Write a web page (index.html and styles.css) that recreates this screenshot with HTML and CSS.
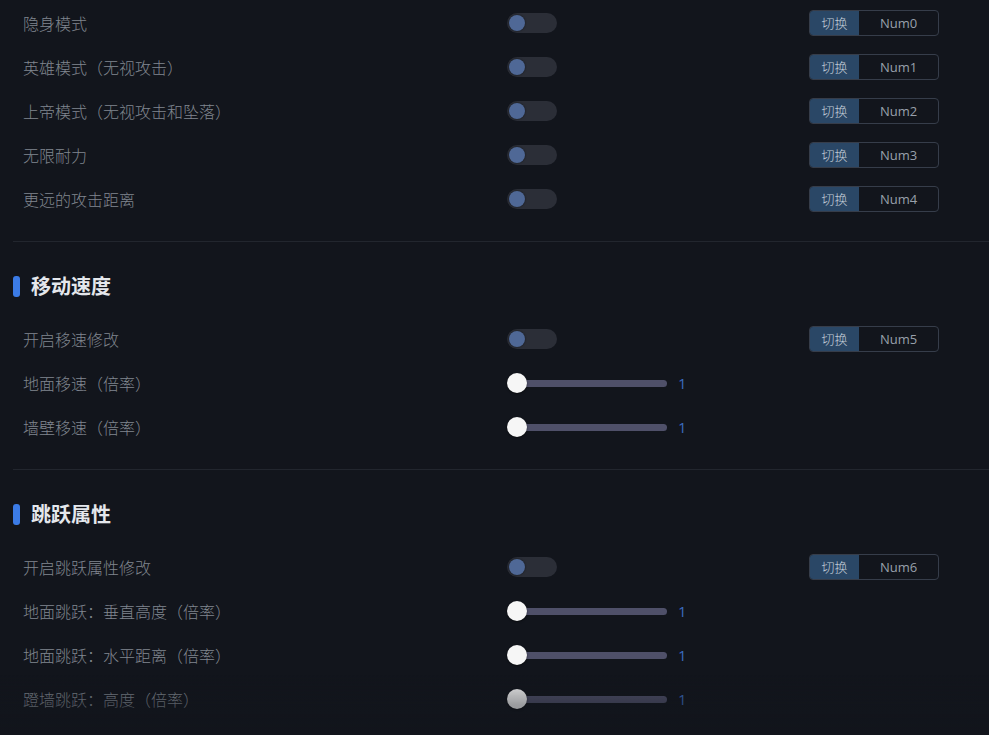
FILE: index.html
```html
<!DOCTYPE html>
<html lang="zh-CN">

<head>
	<meta charset="UTF-8">
	<meta name="viewport" content="width=device-width, initial-scale=1.0">
	<title>设置</title>
	<link rel="stylesheet" href="styles.css">
</head>

<body>
	<div class="panel">
		<section class="group first">
			<div class="row">
				<span class="label">隐身模式</span>
				<span class="switch"><i></i></span>
				<div class="hotkey"><span class="hk-tag">切换</span><span class="hk-key">Num0</span></div>
			</div>
			<div class="row">
				<span class="label">英雄模式（无视攻击）</span>
				<span class="switch"><i></i></span>
				<div class="hotkey"><span class="hk-tag">切换</span><span class="hk-key">Num1</span></div>
			</div>
			<div class="row">
				<span class="label">上帝模式（无视攻击和坠落）</span>
				<span class="switch"><i></i></span>
				<div class="hotkey"><span class="hk-tag">切换</span><span class="hk-key">Num2</span></div>
			</div>
			<div class="row">
				<span class="label">无限耐力</span>
				<span class="switch"><i></i></span>
				<div class="hotkey"><span class="hk-tag">切换</span><span class="hk-key">Num3</span></div>
			</div>
			<div class="row">
				<span class="label">更远的攻击距离</span>
				<span class="switch"><i></i></span>
				<div class="hotkey"><span class="hk-tag">切换</span><span class="hk-key">Num4</span></div>
			</div>
		</section>

		<section class="group">
			<h2 class="group-title">移动速度</h2>
			<div class="row">
				<span class="label">开启移速修改</span>
				<span class="switch"><i></i></span>
				<div class="hotkey"><span class="hk-tag">切换</span><span class="hk-key">Num5</span></div>
			</div>
			<div class="row">
				<span class="label">地面移速（倍率）</span>
				<div class="slider"><span class="track"><i class="knob"></i></span><span class="value">1</span></div>
			</div>
			<div class="row">
				<span class="label">墙壁移速（倍率）</span>
				<div class="slider"><span class="track"><i class="knob"></i></span><span class="value">1</span></div>
			</div>
		</section>

		<section class="group">
			<h2 class="group-title">跳跃属性</h2>
			<div class="row">
				<span class="label">开启跳跃属性修改</span>
				<span class="switch"><i></i></span>
				<div class="hotkey"><span class="hk-tag">切换</span><span class="hk-key">Num6</span></div>
			</div>
			<div class="row">
				<span class="label">地面跳跃：垂直高度（倍率）</span>
				<div class="slider"><span class="track"><i class="knob"></i></span><span class="value">1</span></div>
			</div>
			<div class="row">
				<span class="label">地面跳跃：水平距离（倍率）</span>
				<div class="slider"><span class="track"><i class="knob"></i></span><span class="value">1</span></div>
			</div>
			<div class="row">
				<span class="label">蹬墙跳跃：高度（倍率）</span>
				<div class="slider"><span class="track"><i class="knob"></i></span><span class="value">1</span></div>
			</div>
		</section>
	</div>
	<div class="fade"></div>
</body>

</html>
```

FILE: styles.css
```css
* {
	margin: 0;
	padding: 0;
	box-sizing: border-box;
}

html,
body {
	height: 100%;
	overflow: hidden;
}

body {
	background-color: #12151c;
	font-family: "Noto Sans CJK SC", "Noto Sans", sans-serif;
	color: #80868f;
}

.panel {
	padding: 1px 0 0 13px;
}

.group {
	padding: 31px 0 20px;
	border-top: 1px solid #22262e;
}

.group.first {
	padding-top: 0;
	border-top: none;
}

.group-title {
	display: flex;
	align-items: center;
	height: 26px;
	margin-bottom: 18px;
	font-size: 20px;
	line-height: 26px;
	font-weight: 700;
	color: #e4e7ec;
}

.group-title::before {
	content: "";
	width: 7px;
	height: 21px;
	margin-right: 11px;
	border-radius: 3px;
	background-color: #3b7be6;
}

.row {
	display: grid;
	grid-template-columns: 484px 302px auto;
	align-items: center;
	height: 44px;
	padding-left: 10px;
}

.label {
	font-size: 16px;
	line-height: 20px;
	font-weight: 300;
	color: #80868f;
}

/* 开关 */
.switch {
	position: relative;
	display: block;
	width: 50px;
	height: 20px;
	border-radius: 10px;
	background-color: #2b2e37;
}

.switch>i {
	position: absolute;
	top: 2px;
	left: 2px;
	width: 16px;
	height: 16px;
	border-radius: 50%;
	background-color: #4f6896;
	box-shadow: 0 0 2px rgba(0, 0, 0, 0.6);
}

/* 快捷键 */
.hotkey {
	display: flex;
	width: 130px;
	height: 26px;
	border: 1px solid #363d4a;
	border-radius: 4px;
	overflow: hidden;
	font-size: 13px;
	line-height: 24px;
}

.hk-tag {
	width: 49px;
	text-align: center;
	font-weight: 300;
	background-color: #2a4766;
	color: #c3cdd8;
}

.hk-key {
	flex: 1;
	text-align: center;
	color: #98a0ab;
	font-family: "Open Sans", "Noto Sans", sans-serif;
}

/* 滑块 */
.slider {
	display: flex;
	align-items: center;
	grid-column: 2 / 4;
}

.track {
	position: relative;
	display: block;
	width: 150px;
	height: 7px;
	margin-left: 10px;
	border-radius: 4px;
	background-color: #4f5069;
}

.knob {
	position: absolute;
	top: -7px;
	left: -10px;
	width: 20px;
	height: 20px;
	border-radius: 50%;
	background-color: #f6f6f6;
	box-shadow: 0 1px 2px rgba(0, 0, 0, 0.5);
}

.value {
	margin-left: 11px;
	font-size: 15px;
	line-height: 20px;
	color: #3a6bc0;
	font-family: "Open Sans", "Noto Sans", sans-serif;
}

.fade {
	position: fixed;
	left: 0;
	right: 0;
	bottom: 0;
	height: 60px;
	background: linear-gradient(to bottom, rgba(18, 21, 28, 0), rgba(18, 21, 28, 0.4) 50%, rgba(18, 21, 28, 0.5));
	pointer-events: none;
}
```
